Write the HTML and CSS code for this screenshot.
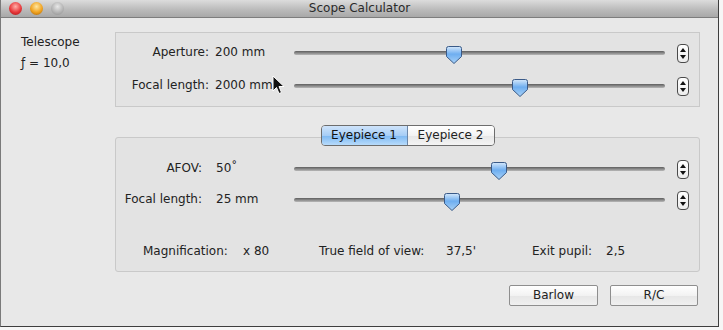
FILE: index.html
```html
<!DOCTYPE html>
<html>
<head>
<meta charset="utf-8">
<link rel="stylesheet" href="styles.css">
</head>
<body>
<div class="window">
  <div class="titlebar">
    <div class="lights">
      <span class="light red"></span>
      <span class="light yellow"></span>
      <span class="light gray"></span>
    </div>
    <div class="title">Scope Calculator</div>
  </div>
  <div class="content">
    <div class="side">
      <div>Telescope</div>
      <div>ƒ = 10,0</div>
    </div>
    <div class="main">
      <div class="box box-scope">
        <div class="row">
          <div class="label">Aperture:</div>
          <div class="value">200 mm</div>
          <div class="slider"><div class="track"></div>
            <svg class="thumb" style="left:152px" viewBox="0 0 16 18" width="16" height="18"><defs><linearGradient id="g1" x1="0" y1="0" x2="0" y2="1"><stop offset="0" stop-color="#d5e8fb"/><stop offset="0.45" stop-color="#6eaef0"/><stop offset="1" stop-color="#a9d2f7"/></linearGradient></defs><path d="M2.5 0.5H13.5Q15.5 0.5 15.5 2.5V10.5L8 17.5L0.5 10.5V2.5Q0.5 0.5 2.5 0.5Z" fill="url(#g1)" stroke="#3a5a88"/></svg>
          </div>
          <div class="stepper"><span class="up"></span><span class="down"></span></div>
        </div>
        <div class="row">
          <div class="label">Focal length:</div>
          <div class="value">2000 mm</div>
          <div class="slider"><div class="track"></div>
            <svg class="thumb" style="left:218px" viewBox="0 0 16 18" width="16" height="18"><path d="M2.5 0.5H13.5Q15.5 0.5 15.5 2.5V10.5L8 17.5L0.5 10.5V2.5Q0.5 0.5 2.5 0.5Z" fill="url(#g1)" stroke="#3a5a88"/></svg>
          </div>
          <div class="stepper"><span class="up"></span><span class="down"></span></div>
        </div>
      </div>

      <div class="box box-eyepiece">
        <div class="tabs">
          <div class="tab selected">Eyepiece 1</div>
          <div class="tab">Eyepiece 2</div>
        </div>
        <div class="row">
          <div class="label">AFOV:</div>
          <div class="value">50˚</div>
          <div class="slider"><div class="track"></div>
            <svg class="thumb" style="left:197px" viewBox="0 0 16 18" width="16" height="18"><path d="M2.5 0.5H13.5Q15.5 0.5 15.5 2.5V10.5L8 17.5L0.5 10.5V2.5Q0.5 0.5 2.5 0.5Z" fill="url(#g1)" stroke="#3a5a88"/></svg>
          </div>
          <div class="stepper"><span class="up"></span><span class="down"></span></div>
        </div>
        <div class="row">
          <div class="label">Focal length:</div>
          <div class="value">25 mm</div>
          <div class="slider"><div class="track"></div>
            <svg class="thumb" style="left:150px" viewBox="0 0 16 18" width="16" height="18"><path d="M2.5 0.5H13.5Q15.5 0.5 15.5 2.5V10.5L8 17.5L0.5 10.5V2.5Q0.5 0.5 2.5 0.5Z" fill="url(#g1)" stroke="#3a5a88"/></svg>
          </div>
          <div class="stepper"><span class="up"></span><span class="down"></span></div>
        </div>
        <div class="results">
          <div>Magnification:</div><div>x 80</div>
          <div>True field of view:</div><div>37,5'</div>
          <div>Exit pupil:</div><div>2,5</div>
        </div>
      </div>

      <div class="buttons">
        <div class="button barlow">Barlow</div>
        <div class="button rc">R/C</div>
      </div>
    </div>
  </div>
  <svg class="cursor" width="13" height="20" viewBox="0 0 13 20"><path d="M1 1V16L4.5 12.5L7 18.5L9.5 17.5L7 11.5H12Z" fill="#111" stroke="#fff" stroke-width="1"/></svg>
</div>
</body>
</html>
```
FILE: styles.css
```css
* { box-sizing: border-box; }
html, body { margin: 0; padding: 0; }
body {
  background: #f6f6f6;
  font-family: "DejaVu Sans", "Liberation Sans", sans-serif;
  font-size: 12px;
  color: #222;
  width: 723px;
  height: 330px;
  overflow: hidden;
}
.window {
  position: relative;
  width: 719px;
  height: 327px;
  background: #e8e8e8;
  border-left: 1px solid #7a7a7a;
  border-right: 1px solid #3e3e3e;
  border-bottom: 1px solid #3e3e3e;
}
.titlebar {
  position: relative;
  height: 18px;
  background: linear-gradient(#dcdcdc, #b9b9b9 60%, #a8a8a8);
  border-bottom: 1px solid #7d7d7d;
  display: flex;
  align-items: center;
  justify-content: center;
}
.lights {
  position: absolute;
  left: 8px;
  top: 2px;
  display: flex;
  gap: 8px;
}
.light {
  width: 13px;
  height: 13px;
  border-radius: 50%;
  display: block;
}
.red { background: radial-gradient(circle at 50% 35%, #ffb0a8, #e8373a 55%, #9c1414); }
.yellow { background: radial-gradient(circle at 50% 35%, #ffe6a0, #f0a21e 55%, #a05c08); }
.gray { background: radial-gradient(circle at 50% 35%, #e8e8e8, #b4b4b4 55%, #8a8a8a); }
.title {
  font-size: 12px;
  line-height: 17px;
  color: #2a2a2a;
}
.content {
  display: flex;
  padding: 14px 0 0 20px;
}
.side {
  width: 94px;
  line-height: 21px;
}
.main {
  width: 585px;
  display: flex;
  flex-direction: column;
}
.box {
  border: 1px solid #c9c9c9;
  background: #e3e3e3;
  display: flex;
  flex-direction: column;
}
.box-scope {
  padding: 7px 10px 9px 0;
  gap: 9px;
}
.box-eyepiece {
  position: relative;
  margin-top: 30px;
  padding: 18px 10px 12px 0;
  gap: 7px;
  border-radius: 3px;
}
.row {
  display: flex;
  align-items: center;
  height: 24px;
}
.label {
  width: 93px;
  text-align: right;
}
.value {
  margin-left: 6px;
  width: 79px;
}
.box-eyepiece .label { width: 86px; }
.box-eyepiece .value { margin-left: 14px; width: 78px; }
.slider {
  position: relative;
  flex: 1;
  height: 24px;
}
.track {
  position: absolute;
  left: 0;
  right: 0;
  top: 11px;
  height: 4px;
  border-radius: 2px;
  background: linear-gradient(#5e5e5e, #8a8a8a 50%, #b8b8b8);
}
.thumb {
  position: absolute;
  top: 6px;
}
.stepper {
  position: relative;
  margin-left: 12px;
  margin-top: 3px;
  width: 12px;
  height: 19px;
  border: 1px solid #4a4a4a;
  border-radius: 4px;
  background: linear-gradient(#ffffff, #ececec);
}
.up, .down {
  position: absolute;
  left: 2px;
  width: 0;
  height: 0;
  border-left: 3px solid transparent;
  border-right: 3px solid transparent;
}
.up { top: 3px; border-bottom: 4px solid #111; }
.down { bottom: 3px; border-top: 4px solid #111; }
.tabs {
  position: absolute;
  top: -13px;
  left: 50%;
  transform: translateX(-50%);
  display: flex;
  border: 1px solid #6d6d6d;
  border-radius: 4px;
  overflow: hidden;
  height: 21px;
}
.tab {
  width: 86px;
  text-align: center;
  line-height: 19px;
  background: linear-gradient(#ffffff, #f3f3f3 50%, #e6e6e6 51%, #f4f4f4);
}
.tab.selected {
  background: linear-gradient(#cfe4fb, #a6cdf6 50%, #7db8f2 51%, #b7dbfb);
  border-right: 1px solid #6b86a8;
  color: #111;
}
.results {
  display: grid;
  grid-template-columns: 100px 76px 127px 86px 74px auto;
  padding-left: 27px;
  margin-top: 25px;
  line-height: 16px;
}
.buttons {
  display: flex;
  justify-content: flex-end;
  gap: 12px;
  margin-top: 13px;
  padding-right: 2px;
}
.button {
  height: 21px;
  line-height: 19px;
  text-align: center;
  border: 1px solid #8e8e8e;
  border-radius: 2px;
  background: linear-gradient(#ffffff, #f2f2f2 50%, #e6e6e6 51%, #f0f0f0);
}
.barlow { width: 89px; }
.rc { width: 88px; }
.cursor {
  position: absolute;
  left: 271px;
  top: 75px;
}
```
